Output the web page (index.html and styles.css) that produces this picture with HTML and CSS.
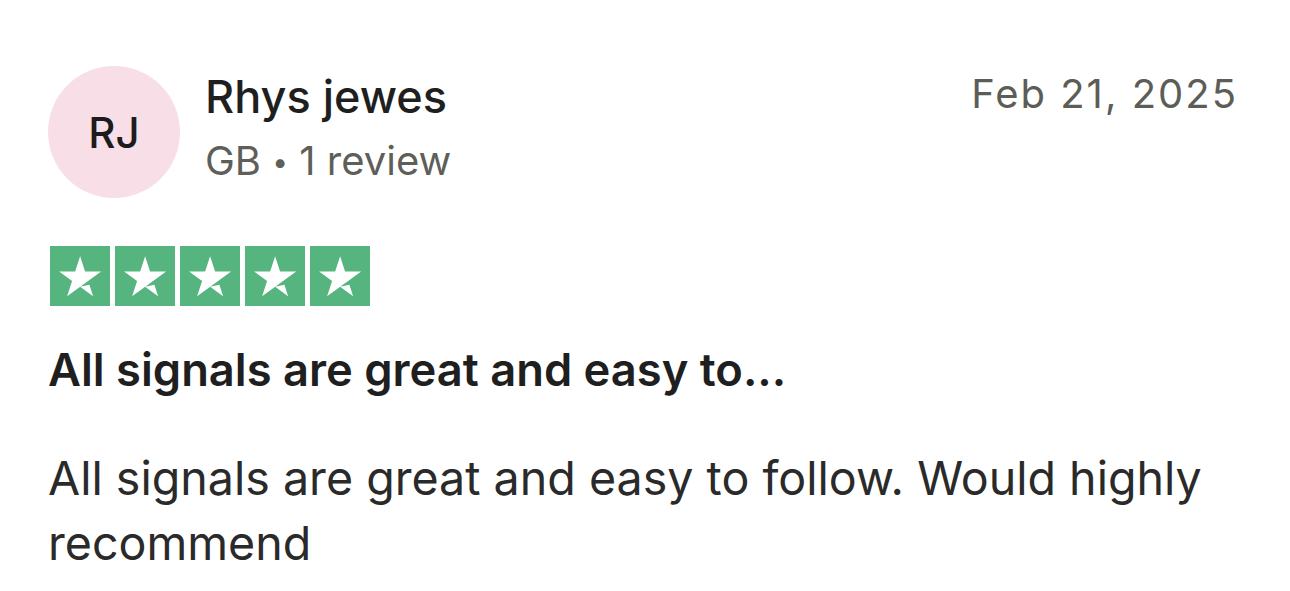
FILE: index.html
```html
<!DOCTYPE html>
<html lang="en">
<head>
    <meta charset="UTF-8">
    <meta name="viewport" content="width=device-width, initial-scale=1.0">
    <title>Review</title>
    <link rel="stylesheet" href="styles.css">
</head>
<body>

<div class="review">
    <div class="review-header">
        <div class="avatar">RJ</div>
        <div class="reviewer">
            <p class="reviewer-name">Rhys jewes</p>
            <p class="reviewer-meta">GB <span class="dot">&bull;</span> 1 review</p>
        </div>
        <p class="review-date">Feb 21, 2025</p>
    </div>

    <div class="stars">
        <svg class="star" viewBox="0 0 46.375 46.33"><path class="star-bg" d="M0 46.33h46.375V0H0z"/><path class="star-fg" d="M39.534 19.711L13.23 38.801l3.838-11.798-10.047-7.292h12.419l3.837-11.798 3.838 11.798h12.419zM23.279 31.51l7.183-1.51 2.862 8.8-10.045-7.29z"/></svg>
        <svg class="star" viewBox="0 0 46.375 46.33"><path class="star-bg" d="M0 46.33h46.375V0H0z"/><path class="star-fg" d="M39.534 19.711L13.23 38.801l3.838-11.798-10.047-7.292h12.419l3.837-11.798 3.838 11.798h12.419zM23.279 31.51l7.183-1.51 2.862 8.8-10.045-7.29z"/></svg>
        <svg class="star" viewBox="0 0 46.375 46.33"><path class="star-bg" d="M0 46.33h46.375V0H0z"/><path class="star-fg" d="M39.534 19.711L13.23 38.801l3.838-11.798-10.047-7.292h12.419l3.837-11.798 3.838 11.798h12.419zM23.279 31.51l7.183-1.51 2.862 8.8-10.045-7.29z"/></svg>
        <svg class="star" viewBox="0 0 46.375 46.33"><path class="star-bg" d="M0 46.33h46.375V0H0z"/><path class="star-fg" d="M39.534 19.711L13.23 38.801l3.838-11.798-10.047-7.292h12.419l3.837-11.798 3.838 11.798h12.419zM23.279 31.51l7.183-1.51 2.862 8.8-10.045-7.29z"/></svg>
        <svg class="star" viewBox="0 0 46.375 46.33"><path class="star-bg" d="M0 46.33h46.375V0H0z"/><path class="star-fg" d="M39.534 19.711L13.23 38.801l3.838-11.798-10.047-7.292h12.419l3.837-11.798 3.838 11.798h12.419zM23.279 31.51l7.183-1.51 2.862 8.8-10.045-7.29z"/></svg>
    </div>

    <h2 class="review-title">All signals are great and easy to...</h2>
    <p class="review-text">All signals are great and easy to follow. Would highly recommend</p>
</div>

</body>
</html>
```

FILE: styles.css
```css
* {
    margin: 0;
    padding: 0;
    box-sizing: border-box;
}

body {
    font-family: 'Inter', 'Liberation Sans', sans-serif;
    background-color: #ffffff;
    color: #1f1f1f;
}

.review {
    padding: 66px 52px 0 48px;
}

.review-header {
    display: flex;
    align-items: flex-start;
}

.avatar {
    width: 132px;
    height: 132px;
    flex: none;
    border-radius: 50%;
    background: #f8dee7;
    display: flex;
    align-items: center;
    justify-content: center;
    font-size: 42px;
    font-weight: 500;
    color: #1c1c1c;
}

.reviewer {
    margin-left: 25px;
    padding-top: 2px;
}

.reviewer-name {
    font-size: 45px;
    font-weight: 500;
    line-height: 58px;
    color: #1f1f1f;
}

.reviewer-meta {
    font-size: 40px;
    line-height: 70px;
    color: #5f5f5a;
}

.reviewer-meta .dot {
    font-size: 28px;
    vertical-align: 3px;
}

.review-date {
    margin-left: auto;
    font-size: 40px;
    line-height: 56px;
    letter-spacing: 2px;
    color: #5d5d58;
}

/* Rating */
.stars {
    display: flex;
    gap: 5px;
    margin-top: 48px;
    margin-left: 2px;
}

.star {
    width: 60px;
    height: 60px;
    display: block;
}

.star-bg {
    fill: #56b57f;
}

.star-fg {
    fill: #ffffff;
}

.review-title {
    font-size: 45.3px;
    font-weight: 600;
    line-height: 56px;
    margin-top: 36px;
    color: #1f1f1f;
}

.review-text {
    font-size: 46.6px;
    line-height: 65px;
    margin-top: 48px;
    color: #2a2a2a;
    max-width: 1200px;
}
```
